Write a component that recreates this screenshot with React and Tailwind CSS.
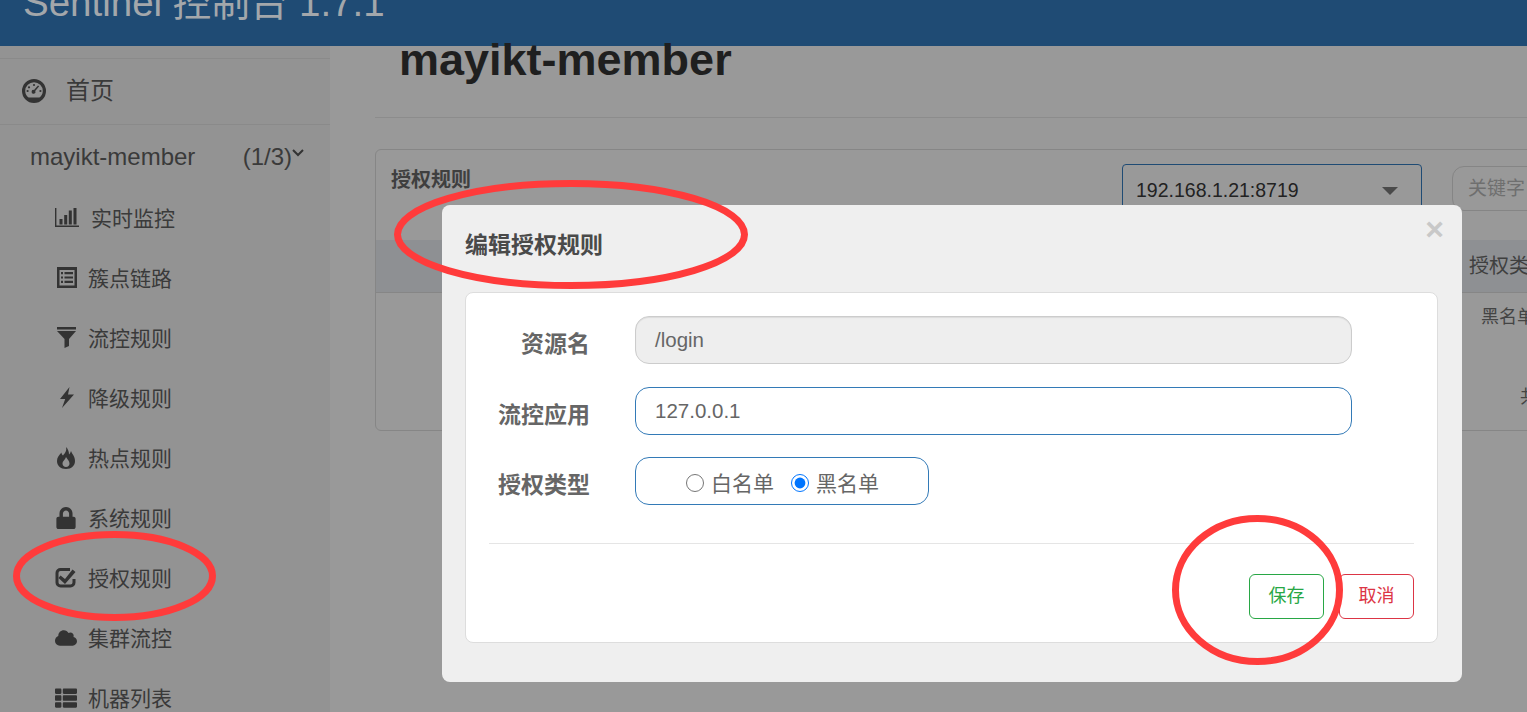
import React from "react";
import { FaCloud, FaLock, FaThList } from "react-icons/fa";

const Dashboard = () => (
  <svg width="26" height="26" viewBox="0 0 26 26" fill="#333">
    <path fillRule="evenodd" d="M13 1a12 12 0 1 0 0 24 12 12 0 0 0 0-24zm0 3.200a8.800 8.800 0 0 1 8.800 8.800c0 3.200-1.700 5.600-3.400 6.600H7.600C5.900 18.600 4.200 16.200 4.200 13A8.800 8.800 0 0 1 13 4.200z" />
    <circle cx="13" cy="7" r="1.100" /><circle cx="8" cy="9.300" r="1.100" /><circle cx="6.600" cy="13" r="1.100" /><circle cx="19.400" cy="13" r="1.100" />
    <path d="M18.200 8.200l-4 4.800a1.900 1.900 0 1 1-1.200-1l4-4.600z" />
  </svg>
);
const Stats = () => (
  <svg width="24" height="19" viewBox="0 0 24 19" fill="#333">
    <path d="M0 0h1.400v17.500H24V19H0z" />
    <path d="M4.500 11h3v5.500h-3zM9.200 7h3v9.500h-3zM13.800 2.500h3v14h-3zM18.500 0h3v16.500h-3z" />
  </svg>
);
const ListAlt = () => (
  <svg width="20" height="21" viewBox="0 0 20 21" fill="#333">
    <path fillRule="evenodd" d="M0 0h20v21H0zm2.500 3v15.500h15V3z" />
    <path d="M4 5h2v2.200H4zM7.500 5H16v2.200H7.500zM4 9.400h2v2.200H4zM7.500 9.400H16v2.200H7.500zM4 13.800h2V16H4zM7.500 13.800H16V16H7.500z" />
  </svg>
);
const Filter = () => (
  <svg width="19" height="21" viewBox="0 0 19 21" fill="#333">
    <path d="M0 0h19v2.400H0zM0 4h19l-7 8v7l-4.500 2v-9z" />
  </svg>
);
const Flash = () => (
  <svg width="15" height="21" viewBox="0 0 15 21" fill="#333">
    <path d="M10.500 0L1 12h5.200L3 21l12-13.500H9z" />
  </svg>
);
const Fire = () => (
  <svg width="18" height="22" viewBox="0 0 18 22" fill="#333">
    <path fillRule="evenodd" d="M9 0c1 4-1 6-3 8.500C4.800 7.500 4.500 6.500 4.500 5.500 2 8 0 10.500 0 14c0 4.500 3.500 8 9 8s9-3.500 9-8c0-5-3-7-4-10-.5 1.500-1 2.500-2 3.500C12 4.500 11 2 9 0zm0 20c-2 0-3.500-1.500-3.500-3.500 0-2.500 2.500-3.500 3.500-6.500 1.500 2.500 3.500 4 3.500 6.500 0 2-1.500 3.500-3.500 3.500z" />
  </svg>
);
const CheckIcon = () => (
  <svg width="21" height="21" viewBox="0 0 21 21">
    <path d="M15 2.500H5.500a3.500 3.500 0 0 0-3.500 3.500v9.500A3.500 3.500 0 0 0 5.500 19h10a3.500 3.500 0 0 0 3.500-3.500V12" fill="none" stroke="#333" strokeWidth="3" />
    <path d="M5.500 8.500l4.500 3.500L17.500 2.500l3 2.500L10 17 3.500 11z" fill="#333" />
  </svg>
);

const items = [
  ["实时监控", <Stats />, "ml-[0px]", "ml-[3px]"],
  ["簇点链路", <ListAlt />, "ml-[2px]", "ml-[0px]"],
  ["流控规则", <Filter />, "ml-[2px]", "ml-[0px]"],
  ["降级规则", <Flash />, "ml-[4px]", "ml-[0px]"],
  ["热点规则", <Fire />, "ml-[2px]", "ml-[0px]"],
  ["系统规则", <FaLock size={22} color="#333" />, "ml-[0px]", "ml-[0px]"],
  ["授权规则", <CheckIcon />, "ml-[0px]", "ml-[0px]"],
  ["集群流控", <FaCloud size={22} color="#333" />, "ml-[0px]", "ml-[0px]"],
  ["机器列表", <FaThList size={22} color="#333" />, "ml-[0px]", "ml-[0px]"],
];

const font = { fontFamily: '"Liberation Sans", "Noto Sans CJK SC", sans-serif' };

export default function App() {
  return (
    <div style={font} className="relative flex h-[712px] w-[1527px] flex-col overflow-hidden bg-[#999999]">
      <header className="h-[46px] shrink-0 overflow-hidden bg-[#1f4b74] pl-[23px]">
        <div className="mt-[-19px] text-[38.500px] leading-[44px] text-[#a3a7ab]">Sentinel 控制台 1.7.1</div>
      </header>
      <div className="flex min-h-0 flex-1">
        <aside className="w-[330px] shrink-0 bg-[#939393] text-[#3a3a3a]">
          <div className="mt-[12px] flex h-[67px] items-center border-y border-[#8a8a8a] pl-[21px] text-[24px]">
            <span className="mb-[2px] flex"><Dashboard /></span>
            <span className="ml-[19px] mt-[-2px]">首页</span>
          </div>
          <div className="flex h-[64px] items-center pl-[30px] pr-[26px] text-[24px]">
            <span>mayikt-member</span>
            <span className="ml-auto">(1/3)</span>
            <svg className="mb-[8px]" width="12" height="8" viewBox="0 0 12 8" fill="none" stroke="#333" strokeWidth="2"><path d="M1 1l5 5 5-5" /></svg>
          </div>
          {items.map(([t, icon, a, b]) => (
            <div key={t} className="flex h-[60px] items-center pl-[55px] text-[21px]">
              <span className="flex w-[33px] shrink-0 items-center">
                <span className={`mb-[3px] flex ${a}`}>{icon}</span>
              </span>
              <span className={b}>{t}</span>
            </div>
          ))}
        </aside>
        <main className="min-w-0 flex-1 pl-[45px]">
          <div className="h-[73px] border-b border-[#8c8c8c]">
            <h1 className="ml-[24px] mt-[-1px] text-[45px] font-bold leading-[30px] text-[#1f1f1f]">mayikt-member</h1>
          </div>
          <section className="mt-[31px] h-[282px] w-[1300px] rounded-[6px] border border-[#868686]">
            <div className="flex h-[90px] pl-[15px]">
              <div className="mt-[16px] text-[20px] font-bold leading-[28px] text-[#3f3f3f]">授权规则</div>
              <div className="ml-[651px] mt-[14px] flex h-[60px] w-[300px] items-start justify-between rounded-[4px] border border-[#1f4b74] pl-[13px] pr-[23px] pt-[12px] text-[19.500px] leading-[26px] text-[#222222]">
                <span>192.168.1.21:8719</span>
                <span className="mt-[10px] border-x-[8px] border-t-[8px] border-x-transparent border-t-[#4a4a4a]" />
              </div>
              <div className="ml-[30px] mt-[16px] h-[45px] w-[200px] rounded-[12px] border border-[#858585] pl-[15px] pt-[8px] text-[19px] leading-[28px] text-[#6f6f6f]">关键字</div>
            </div>
            <div className="flex h-[53px] items-center border-b border-[#868686] bg-[#8e9093] pl-[1093px] text-[20px] text-[#3f3f3f]">授权类型</div>
            <div className="pl-[1105px] pt-[13px] text-[18px] leading-[22px] text-[#444444]">黑名单</div>
            <div className="pl-[1144px] pt-[58px] text-[18px] leading-[22px] text-[#444444]">共 1 条</div>
          </section>
        </main>
      </div>

      <div className="absolute left-[442px] top-[205px] flex h-[477px] w-[1020px] flex-col rounded-[8px] bg-[#efefef] pl-[23px] pr-[24px]">
        <div className="flex h-[87px] shrink-0 items-start justify-between">
          <h2 className="mt-[25px] text-[23px] font-bold leading-[30px] text-[#4a4a4a]">编辑授权规则</h2>
          <span className="mr-[-6px] mt-[8px] text-[32px] font-bold leading-[32px] text-[#c8c8c8]">×</span>
        </div>
        <div className="h-[351px] rounded-[8px] border border-[#dddddd] bg-white pl-[23px] pr-[23px]">
          <div className="mt-[23px] flex h-[48px] items-center">
            <label className="w-[101px] pt-[9px] text-right text-[23px] font-bold text-[#666666]">资源名</label>
            <div className="ml-[45px] h-[48px] w-[717px] rounded-[14px] border border-[#cccccc] bg-[#eeeeee] pl-[19px] pt-[8px] text-[20.500px] leading-[30px] text-[#666666] shadow-[inset_0_1px_1px_rgba(0,0,0,0.08)]">/login</div>
          </div>
          <div className="mt-[23px] flex h-[48px] items-center">
            <label className="w-[101px] pt-[9px] text-right text-[23px] font-bold text-[#666666]">流控应用</label>
            <div className="ml-[45px] h-[48px] w-[717px] rounded-[14px] border border-[#337ab7] pl-[19px] pt-[8px] text-[20.500px] leading-[30px] text-[#666666]">127.0.0.1</div>
          </div>
          <div className="mt-[22px] flex h-[48px] items-center">
            <label className="w-[101px] pt-[9px] text-right text-[23px] font-bold text-[#666666]">授权类型</label>
            <div className="ml-[45px] flex h-[48px] w-[294px] items-center rounded-[14px] border border-[#337ab7] pl-[50px] pt-[4px] text-[21px] text-[#666666]">
              <input type="radio" name="t" className="m-0 h-[18px] w-[18px]" />
              <span className="ml-[7px] pt-[2px]">白名单</span>
              <input type="radio" name="t" defaultChecked className="m-0 ml-[17px] h-[18px] w-[18px]" />
              <span className="ml-[7px] pt-[2px]">黑名单</span>
            </div>
          </div>
          <div className="mt-[38px] flex flex-col border-t border-[#e5e5e5]">
            <div className="mt-[30px] flex justify-end gap-[15px]">
              <button className="h-[45px] w-[75px] rounded-[6px] border border-[#28a745] bg-white text-[18px] text-[#28a745]">保存</button>
              <button className="h-[45px] w-[75px] rounded-[6px] border border-[#dc3545] bg-white text-[18px] text-[#dc3545]">取消</button>
            </div>
          </div>
        </div>
      </div>

      <svg className="pointer-events-none absolute left-0 top-0" width="1527" height="712" fill="none" stroke="#ff3b3b" strokeWidth="7">
        <ellipse cx="571" cy="234.500" rx="173.500" ry="51" />
        <ellipse cx="114.500" cy="576" rx="98" ry="41.500" />
        <ellipse cx="1257.500" cy="590" rx="82" ry="71.500" />
      </svg>
    </div>
  );
}
